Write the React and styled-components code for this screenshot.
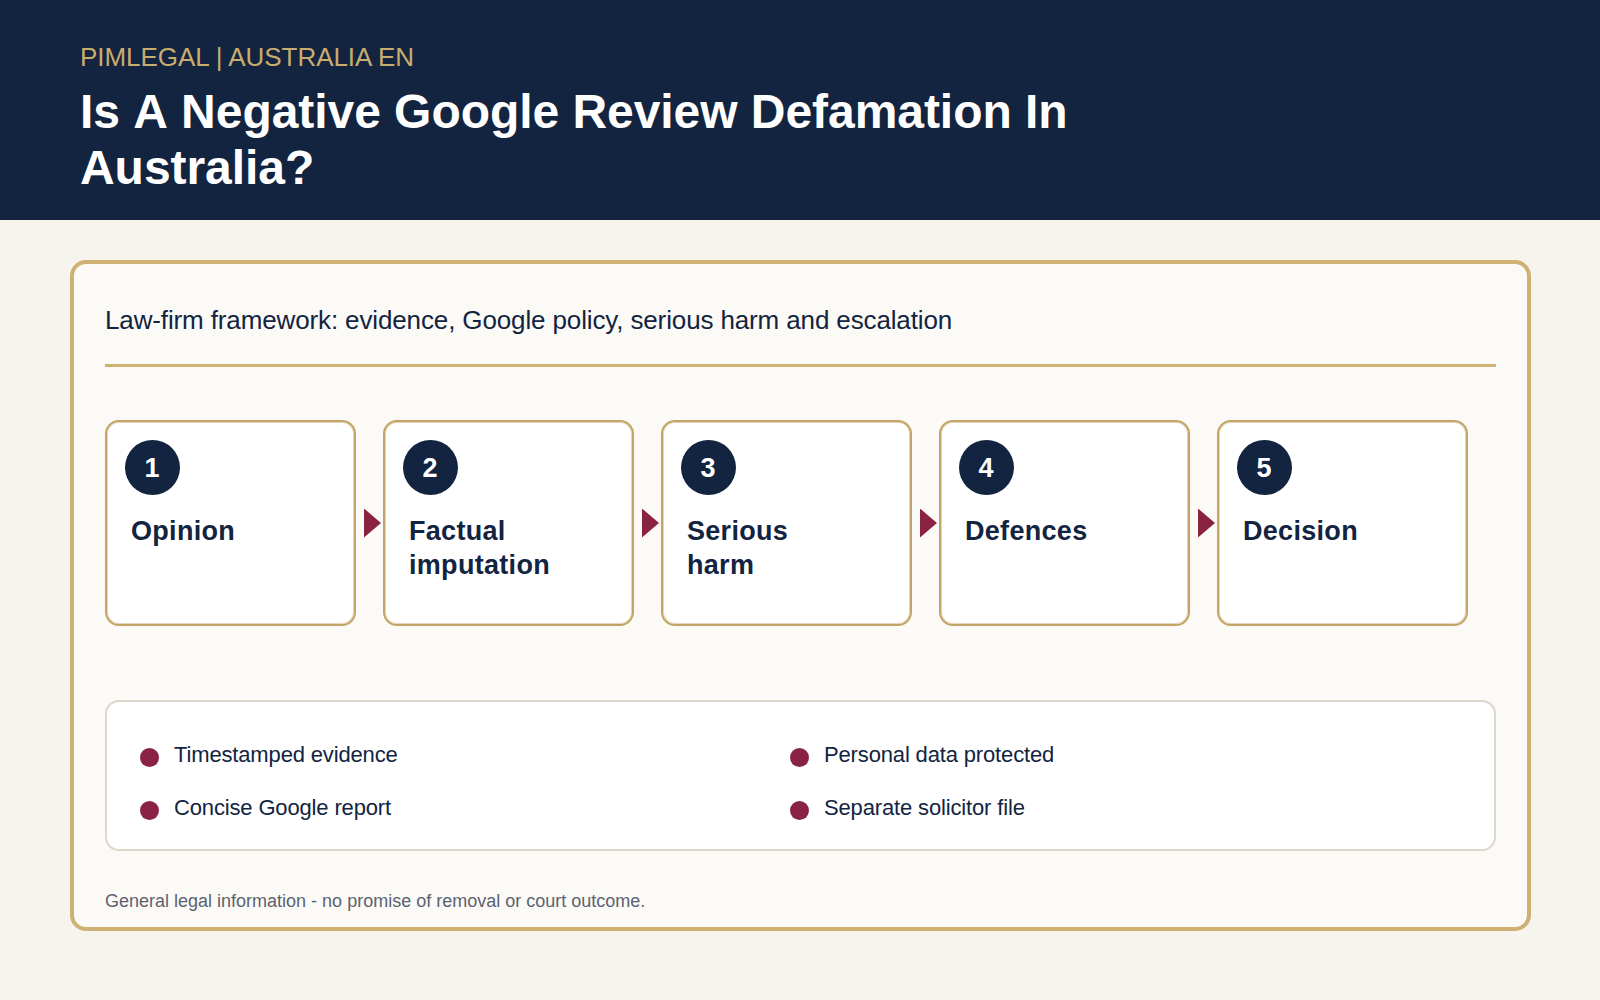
import React from "react";
import styled, { createGlobalStyle } from "styled-components";

const Global = createGlobalStyle`
  html, body { margin: 0; padding: 0; background: #f7f4ed; }
  * { box-sizing: border-box; }
  body { font-family: "Liberation Sans", Arial, sans-serif; color: #12243f; }
`;
const Page = styled.div`
  min-height: 1000px;
  background: #f7f4ed;
`;
const Header = styled.header`
  height: 220px;
  background: #12243f;
  padding: 42px 80px 0;
`;
const Eyebrow = styled.div`
  font-size: 26px;
  line-height: 30px;
  letter-spacing: -0.05px;
  color: #c9ad6e;
`;
const Title = styled.h1`
  margin: 12px 0 0;
  max-width: 1040px;
  font-size: 48px;
  line-height: 56px;
  font-weight: 700;
  font-kerning: none;
  letter-spacing: -0.05px;
  color: #fff;
`;
const Panel = styled.main`
  margin: 40px 69px 0 70px;
  height: 671px;
  padding: 0 31px;
  background: #fbfaf7;
  border: 4px solid #cfb173;
  border-radius: 16px;
`;
const Subtitle = styled.div`
  padding: 41px 0 29px;
  font-size: 26px;
  line-height: 30px;
  letter-spacing: -0.13px;
  border-bottom: 3px solid #cfb173;
`;
const Steps = styled.div`
  display: flex;
  margin-top: 53px;
  align-items: center;
`;
const Card = styled.div`
  flex: 0 0 251px;
  height: 206px;
  padding: 18px;
  background: #fff;
  border: 2px solid #c2a566;
  box-shadow: inset 0 0 0 1px rgba(194, 165, 102, 0.45);
  border-radius: 14px;
`;
const Badge = styled.div`
  width: 55px;
  height: 55px;
  padding: 1px 1px 0 0;
  border-radius: 50%;
  background: #12243f;
  color: #fff;
  display: flex;
  align-items: center;
  justify-content: center;
  font-size: 27px;
  font-weight: 700;
`;
const Label = styled.div`
  margin: 19px 0 0 6px;
  font-size: 27px;
  line-height: 34px;
  font-weight: 700;
  letter-spacing: 0.3px;
  white-space: pre-line;
`;
const ArrowSlot = styled.div`
  flex: 0 0 27px;
  display: flex;
  padding-left: 8px;
`;
const Arrow = styled.div`
  width: 17px;
  height: 29px;
  background: #8a2244;
  clip-path: polygon(0 0, 100% 50%, 0 100%);
`;
const Checks = styled.ul`
  list-style: none;
  margin: 74px 0 0;
  height: 151px;
  padding: 40px 0 0 33px;
  display: grid;
  grid-template-columns: 650px 1fr;
  grid-auto-rows: 25px;
  row-gap: 28px;
  background: #fff;
  border: 2px solid #dcd7cb;
  border-radius: 14px;
`;
const Check = styled.li`
  display: flex;
  gap: 15px;
  font-size: 22px;
  line-height: 25px;
  letter-spacing: -0.15px;
`;
const Dot = styled.span`
  flex: 0 0 19px;
  height: 19px;
  margin-top: 6px;
  border-radius: 50%;
  background: #8a2244;
`;
const Note = styled.div`
  margin-top: 39px;
  font-size: 18px;
  line-height: 22px;
  color: #5c6270;
`;

const steps = ["Opinion", "Factual\nimputation", "Serious\nharm", "Defences", "Decision"];
const checks = ["Timestamped evidence", "Personal data protected", "Concise Google report", "Separate solicitor file"];

export default function App() {
  return (
    <Page>
      <Global />
      <Header>
        <Eyebrow>PIMLEGAL | AUSTRALIA EN</Eyebrow>
        <Title>Is A Negative Google Review Defamation In Australia?</Title>
      </Header>
      <Panel>
        <Subtitle>Law-firm framework: evidence, Google policy, serious harm and escalation</Subtitle>
        <Steps>
          {steps.map((s, i) => (
            <React.Fragment key={s}>
              <Card>
                <Badge>{i + 1}</Badge>
                <Label>{s}</Label>
              </Card>
              {i < steps.length - 1 && (
                <ArrowSlot>
                  <Arrow />
                </ArrowSlot>
              )}
            </React.Fragment>
          ))}
        </Steps>
        <Checks>
          {checks.map((c) => (
            <Check key={c}>
              <Dot />
              {c}
            </Check>
          ))}
        </Checks>
        <Note>General legal information - no promise of removal or court outcome.</Note>
      </Panel>
    </Page>
  );
}
